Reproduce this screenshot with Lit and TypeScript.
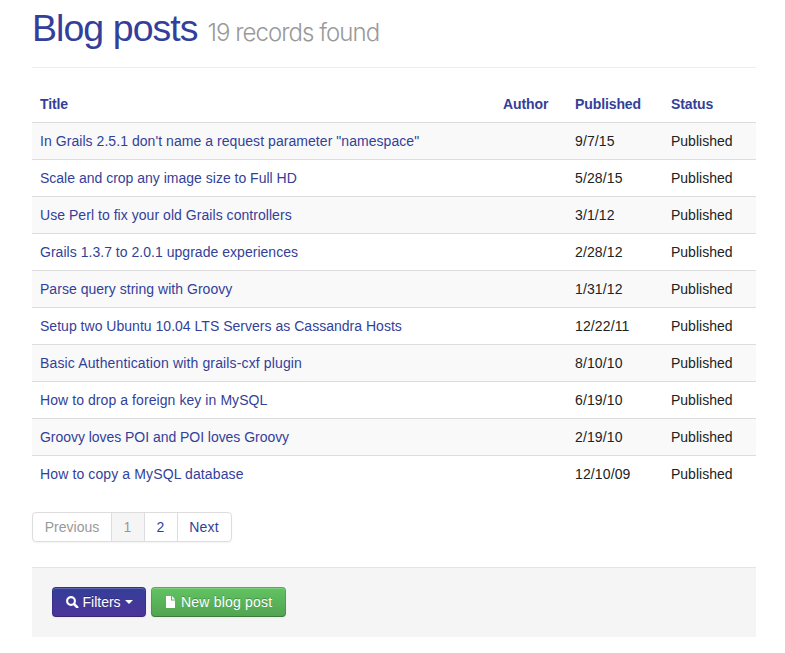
import { LitElement, html, css, svg } from "lit";
import { customElement, property } from "lit/decorators.js";
import { classMap } from "lit/directives/class-map.js";

interface Post {
  title: string;
  published: string;
  spacing: number;
}

const POSTS: Post[] = [
  { title: "In Grails 2.5.1 don't name a request parameter \"namespace\"", published: "9/7/15", spacing: 0.055 },
  { title: "Scale and crop any image size to Full HD", published: "5/28/15", spacing: 0 },
  { title: "Use Perl to fix your old Grails controllers", published: "3/1/12", spacing: 0.045 },
  { title: "Grails 1.3.7 to 2.0.1 upgrade experiences", published: "2/28/12", spacing: 0.03 },
  { title: "Parse query string with Groovy", published: "1/31/12", spacing: 0.03 },
  { title: "Setup two Ubuntu 10.04 LTS Servers as Cassandra Hosts", published: "12/22/11", spacing: 0.02 },
  { title: "Basic Authentication with grails-cxf plugin", published: "8/10/10", spacing: 0.14 },
  { title: "How to drop a foreign key in MySQL", published: "6/19/10", spacing: 0.075 },
  { title: "Groovy loves POI and POI loves Groovy", published: "2/19/10", spacing: -0.04 },
  { title: "How to copy a MySQL database", published: "12/10/09", spacing: 0.12 },
];

@customElement("post-table")
class PostTable extends LitElement {
  @property({ attribute: false }) posts: Post[] = [];

  static styles = css`
    :host { display: block; }
    .row {
      display: grid;
      grid-template-columns: 463px 72px 96px 1fr;
      line-height: 20px;
      border-top: 1px solid #ddd;
    }
    .head { border-top: 0; font-weight: bold; color: #333f99; letter-spacing: -0.1px; }
    .cell { padding: 8px; white-space: nowrap; }
    .date { letter-spacing: 0.12px; }
    .odd { background: #f9f9f9; }
    .link { color: #333f99; text-decoration: none; }
  `;

  render() {
    return html`
      <div class="row head">
        <div class="cell">Title</div>
        <div class="cell">Author</div>
        <div class="cell">Published</div>
        <div class="cell">Status</div>
      </div>
      ${this.posts.map(
        (p, i) => html`
          <div class=${classMap({ row: true, odd: i % 2 === 0 })}>
            <div class="cell"><a class="link" href="#" style="letter-spacing:${p.spacing}px">${p.title}</a></div>
            <div class="cell"></div>
            <div class="cell date">${p.published}</div>
            <div class="cell">Published</div>
          </div>
        `
      )}
    `;
  }
}

const searchIcon = svg`<circle cx="5" cy="5" r="3.9" fill="none" stroke="currentColor" stroke-width="2.1"/><path d="M8 8l3.2 3.2" stroke="currentColor" stroke-width="2.5" stroke-linecap="round"/>`;
const fileIcon = svg`<path fill="currentColor" d="M0 0h5v4.6h4.4V12H0zM6 0l3.4 3.6H6z"/>`;

@customElement("app-root")
class AppRoot extends LitElement {
  static styles = css`
    :host {
      display: block;
      padding: 0 29px 0 32px;
      height: 653px;
      box-sizing: border-box;
      overflow: hidden;
      background: #fff;
      color: #222;
      font: 14px/20px "Liberation Sans", Arial, sans-serif;
    }
    .header {
      display: flex;
      align-items: baseline;
      height: 67px;
      border-bottom: 1px solid #eee;
      margin-bottom: 18px;
      white-space: nowrap;
    }
    .title {
      margin: 0;
      font-size: 37.5px;
      line-height: 57px;
      font-weight: 400;
      letter-spacing: -0.95px;
      color: #333f99;
      width: 175.5px;
    }
    .count {
      font-family: Inter, "Liberation Sans", sans-serif;
      font-size: 24px;
      font-weight: 300;
      letter-spacing: -0.95px;
      color: #999;
    }
    .pages {
      display: flex;
      width: max-content;
      margin: 20px 0 25px;
      border: 1px solid #ddd;
      border-radius: 4px;
      box-shadow: 0 1px 2px rgba(0, 0, 0, 0.05);
      overflow: hidden;
    }
    .page {
      box-sizing: border-box;
      height: 28px;
      line-height: 28px;
      padding-right: 1px;
      text-align: center;
      color: #333f99;
      border-left: 1px solid #ddd;
      width: 33px;
    }
    .prev { border-left: 0; width: 78px; padding-right: 0; color: #999; }
    .active { background: #f5f5f5; color: #999; }
    .next { width: 54px; letter-spacing: 0.15px; }
    .actions {
      display: flex;
      gap: 5px;
      padding: 19px 20px 20px;
      background: #f5f5f5;
      border-top: 1px solid #e5e5e5;
    }
    .btn {
      display: flex;
      align-items: center;
      box-sizing: border-box;
      height: 30px;
      margin: 0;
      padding: 0 0 0 13px;
      font: inherit;
      color: #fff;
      text-shadow: 0 -1px 0 rgba(0, 0, 0, 0.25);
      white-space: nowrap;
      border: 1px solid rgba(0, 0, 0, 0.12);
      border-bottom-color: rgba(0, 0, 0, 0.25);
      border-radius: 4px;
      box-shadow: inset 0 1px 0 rgba(255, 255, 255, 0.2), 0 1px 2px rgba(0, 0, 0, 0.05);
    }
    .primary { width: 94px; background: linear-gradient(#333f99, #4d3399) border-box; }
    .success { width: 135px; letter-spacing: 0.2px; background: linear-gradient(#62c462, #51a351) border-box; }
    .search { width: 12.5px; height: 12.5px; margin-right: 4px; }
    .file { width: 9.5px; height: 12px; margin: 0 6px 0 0.5px; }
    .caret {
      margin: 0 0 1px 4.5px;
      border: 4px solid transparent;
      border-top-color: #fff;
      border-bottom: 0;
    }
  `;

  render() {
    return html`
      <div class="header">
        <h1 class="title">Blog posts</h1>
        <span class="count">19 records found</span>
      </div>
      <post-table .posts=${POSTS}></post-table>
      <div class="pages">
        <span class="page prev">Previous</span>
        <span class="page active">1</span>
        <span class="page">2</span>
        <span class="page next">Next</span>
      </div>
      <div class="actions">
        <button class="btn primary">
          <svg class="search" viewBox="0 0 12.5 12.5">${searchIcon}</svg>
          <span>Filters</span>
          <span class="caret"></span>
        </button>
        <button class="btn success">
          <svg class="file" viewBox="0 0 9.5 12">${fileIcon}</svg>
          <span>New blog post</span>
        </button>
      </div>
    `;
  }
}
